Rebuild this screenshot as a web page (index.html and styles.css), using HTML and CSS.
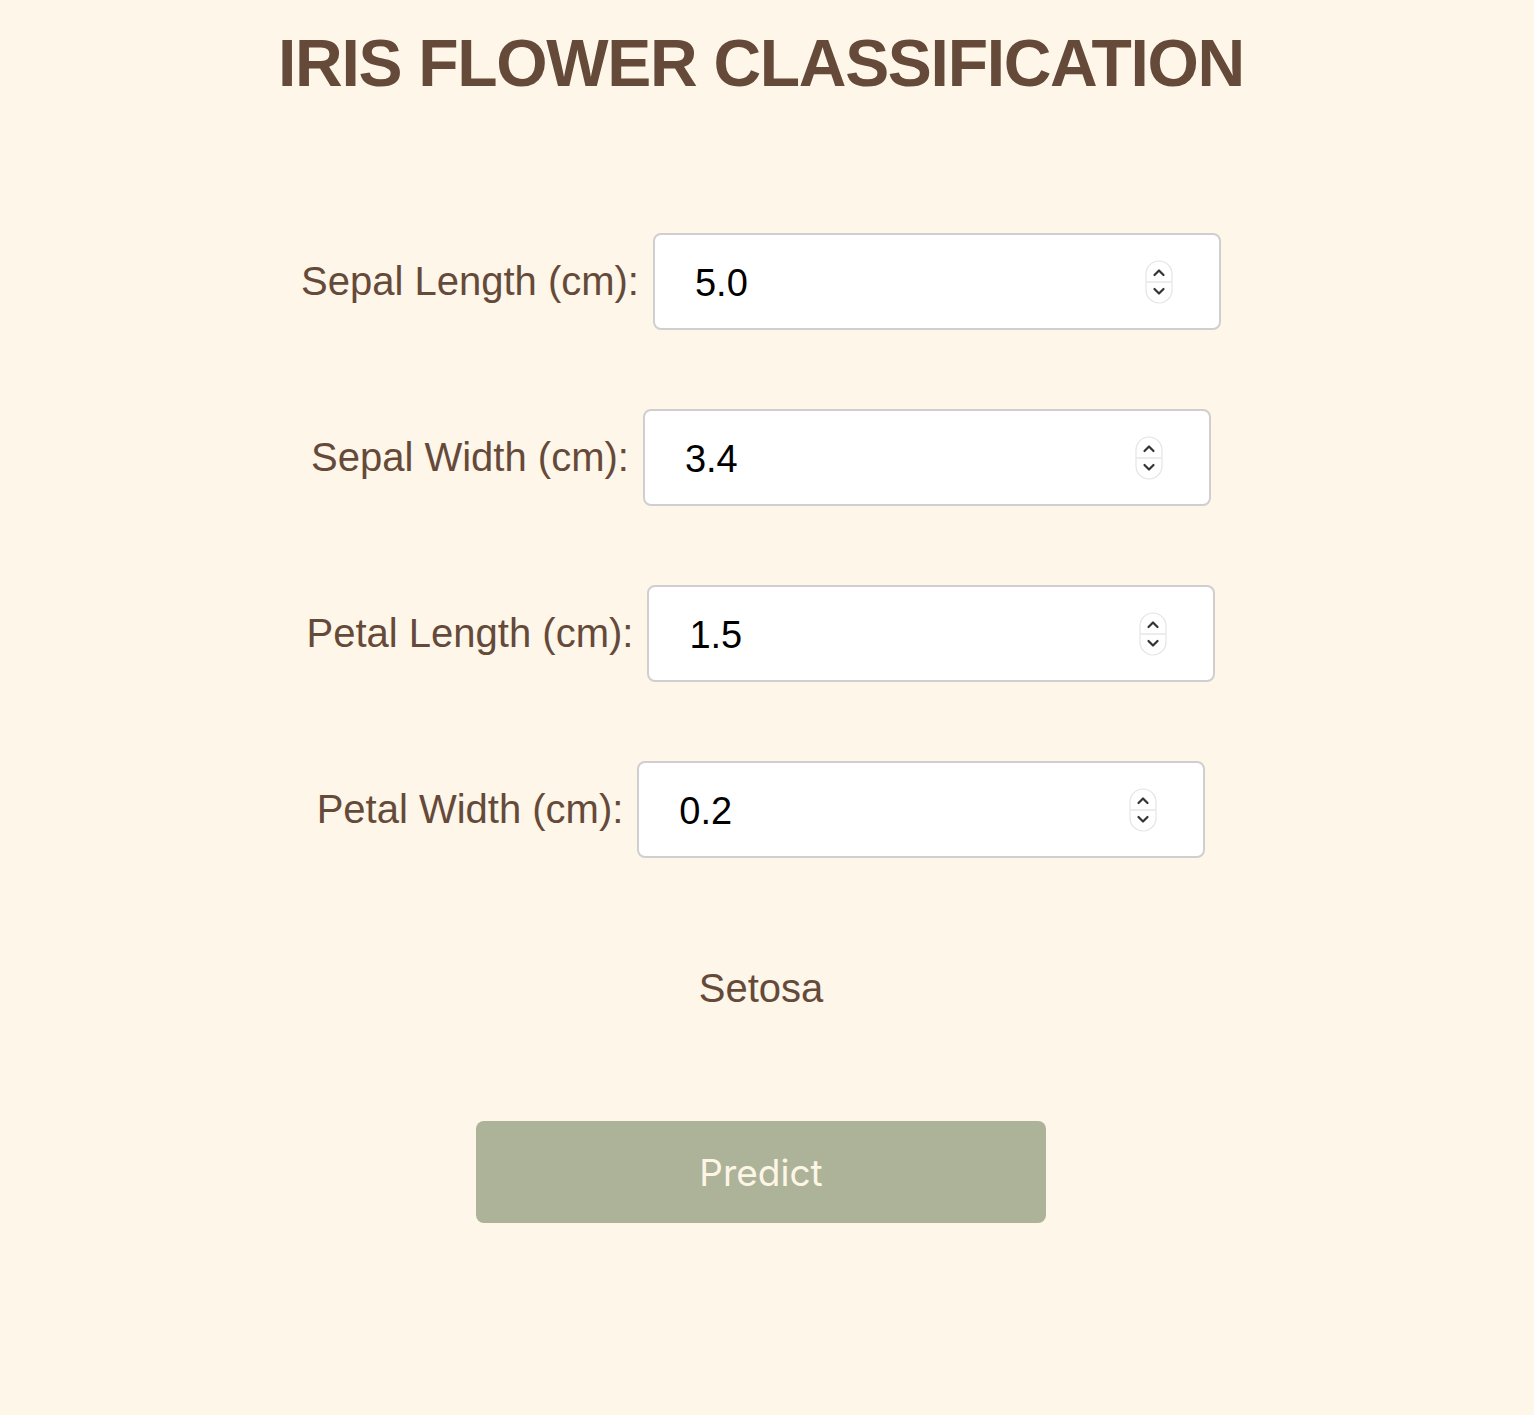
FILE: index.html
```html
<!DOCTYPE html>
<html lang="en">
<head>
<meta charset="utf-8">
<title>Iris Flower Classification</title>
<link rel="stylesheet" href="styles.css">
</head>
<body>
<main class="page">
  <h1 class="title">IRIS FLOWER CLASSIFICATION</h1>
  <form class="form">
    <div class="row">
      <label class="label" for="sl">Sepal Length (cm):</label>
      <div class="field">
        <input class="value" id="sl" type="text" value="5.0">
        <svg class="spin" width="28" height="44" viewBox="0 0 28 44"><rect x="1" y="1" width="26" height="42" rx="13" fill="#fff" stroke="#e4e4e4" stroke-width="1.2"/><line x1="1.5" y1="22" x2="26.5" y2="22" stroke="#e0e0e0" stroke-width="1.2"/><path d="M9.5 15 L14 10.5 L18.5 15" fill="none" stroke="#333" stroke-width="2.2" stroke-linecap="round" stroke-linejoin="round"/><path d="M9.5 29 L14 33.5 L18.5 29" fill="none" stroke="#333" stroke-width="2.2" stroke-linecap="round" stroke-linejoin="round"/></svg>
      </div>
    </div>
    <div class="row">
      <label class="label" for="sw">Sepal Width (cm):</label>
      <div class="field">
        <input class="value" id="sw" type="text" value="3.4">
        <svg class="spin" width="28" height="44" viewBox="0 0 28 44"><rect x="1" y="1" width="26" height="42" rx="13" fill="#fff" stroke="#e4e4e4" stroke-width="1.2"/><line x1="1.5" y1="22" x2="26.5" y2="22" stroke="#e0e0e0" stroke-width="1.2"/><path d="M9.5 15 L14 10.5 L18.5 15" fill="none" stroke="#333" stroke-width="2.2" stroke-linecap="round" stroke-linejoin="round"/><path d="M9.5 29 L14 33.5 L18.5 29" fill="none" stroke="#333" stroke-width="2.2" stroke-linecap="round" stroke-linejoin="round"/></svg>
      </div>
    </div>
    <div class="row">
      <label class="label" for="pl">Petal Length (cm):</label>
      <div class="field">
        <input class="value" id="pl" type="text" value="1.5">
        <svg class="spin" width="28" height="44" viewBox="0 0 28 44"><rect x="1" y="1" width="26" height="42" rx="13" fill="#fff" stroke="#e4e4e4" stroke-width="1.2"/><line x1="1.5" y1="22" x2="26.5" y2="22" stroke="#e0e0e0" stroke-width="1.2"/><path d="M9.5 15 L14 10.5 L18.5 15" fill="none" stroke="#333" stroke-width="2.2" stroke-linecap="round" stroke-linejoin="round"/><path d="M9.5 29 L14 33.5 L18.5 29" fill="none" stroke="#333" stroke-width="2.2" stroke-linecap="round" stroke-linejoin="round"/></svg>
      </div>
    </div>
    <div class="row">
      <label class="label" for="pw">Petal Width (cm):</label>
      <div class="field">
        <input class="value" id="pw" type="text" value="0.2">
        <svg class="spin" width="28" height="44" viewBox="0 0 28 44"><rect x="1" y="1" width="26" height="42" rx="13" fill="#fff" stroke="#e4e4e4" stroke-width="1.2"/><line x1="1.5" y1="22" x2="26.5" y2="22" stroke="#e0e0e0" stroke-width="1.2"/><path d="M9.5 15 L14 10.5 L18.5 15" fill="none" stroke="#333" stroke-width="2.2" stroke-linecap="round" stroke-linejoin="round"/><path d="M9.5 29 L14 33.5 L18.5 29" fill="none" stroke="#333" stroke-width="2.2" stroke-linecap="round" stroke-linejoin="round"/></svg>
      </div>
    </div>
    <p class="result">Setosa</p>
    <button class="predict" type="button">Predict</button>
  </form>
</main>
</body>
</html>
```
FILE: styles.css
```css
html, body {
  margin: 0;
  padding: 0;
  background: #fef6e9;
}
.page {
  width: 1522px;
  display: flex;
  flex-direction: column;
  align-items: center;
  font-family: "Liberation Sans", Arial, sans-serif;
  color: #654a3a;
}
.title {
  margin: 28px 0 0;
  font-size: 66px;
  font-weight: bold;
  line-height: 70px;
  letter-spacing: -1.3px;
}
.form {
  display: flex;
  flex-direction: column;
  align-items: center;
  margin-top: 135px;
}
.row {
  display: flex;
  align-items: center;
  gap: 14px;
  margin-bottom: 79px;
}
.label {
  font-size: 40px;
}
.field {
  box-sizing: border-box;
  width: 568px;
  height: 97px;
  background: #fff;
  border: 2px solid #cfcfcf;
  border-radius: 8px;
  display: flex;
  align-items: center;
  padding: 0 46px 0 40px;
}
.value {
  flex: 1;
  min-width: 0;
  border: none;
  outline: none;
  background: transparent;
  font-family: "Liberation Sans", Arial, sans-serif;
  font-size: 38px;
  color: #000;
  padding: 4px 0 0;
}
.spin {
  flex: none;
  display: block;
}
.result {
  margin: 28px 0 0;
  font-size: 40px;
  line-height: 46px;
}
.predict {
  margin-top: 110px;
  width: 570px;
  height: 102px;
  border: none;
  border-radius: 8px;
  background: #adb399;
  color: #fdf6e6;
  font-family: Inter, "Noto Sans", sans-serif;
  font-size: 37px;
}
```
